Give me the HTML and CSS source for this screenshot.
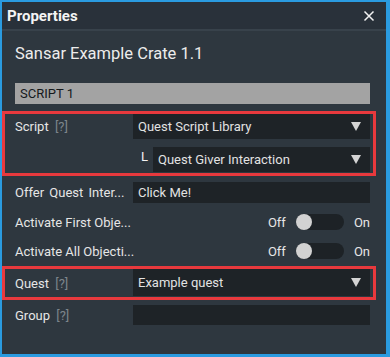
FILE: index.html
```html
<!DOCTYPE html>
<html lang="en">
  <head>
    <meta charset="UTF-8" />
    <meta name="viewport" content="width=device-width, initial-scale=1.0" />
    <title>Properties</title>
    <link rel="stylesheet" href="styles.css">
  </head>
  <body>
    <div class="panel">
      <div class="titlebar">
        <span class="title">Properties</span>
        <svg class="close" width="12" height="12" viewBox="0 0 12 12">
          <path d="M1.5 1.5 L10.5 10.5 M10.5 1.5 L1.5 10.5" stroke="#f2f2f2" stroke-width="1.5" />
        </svg>
      </div>

      <div class="content">
        <div class="object-name">Sansar Example Crate 1.1</div>

        <div class="section-bar">SCRIPT 1</div>

        <div class="highlight script-box">
          <div class="row">
            <div class="label">Script <span class="help">[?]</span></div>
            <div class="dropdown">
              <span>Quest Script Library</span>
              <span class="arrow"></span>
            </div>
          </div>
          <div class="row sub-row">
            <span class="sub-mark">L</span>
            <div class="dropdown">
              <span>Quest Giver Interaction</span>
              <span class="arrow"></span>
            </div>
          </div>
        </div>

        <div class="row offer-row">
          <div class="label wide">Offer Quest Inter...</div>
          <div class="textbox">Click Me!</div>
        </div>

        <div class="row toggle-row">
          <div class="label">Activate First Obje...</div>
          <div class="switch">
            <span>Off</span>
            <span class="track"><span class="knob"></span></span>
            <span>On</span>
          </div>
        </div>

        <div class="row toggle-row">
          <div class="label">Activate All Objecti...</div>
          <div class="switch">
            <span>Off</span>
            <span class="track"><span class="knob"></span></span>
            <span>On</span>
          </div>
        </div>

        <div class="highlight quest-box">
          <div class="row">
            <div class="label">Quest <span class="help">[?]</span></div>
            <div class="dropdown quest-dropdown">
              <span>Example quest</span>
              <span class="arrow"></span>
            </div>
          </div>
        </div>

        <div class="row group-row">
          <div class="label">Group <span class="help">[?]</span></div>
          <div class="textbox"></div>
        </div>
      </div>
    </div>
  </body>
</html>
```

FILE: styles.css
```css
html,
body {
  margin: 0;
  padding: 0;
  background-color: #2a9be0;
}

body {
  font-family: Roboto, "Noto Sans", sans-serif;
  color: #e6e6e6;
  font-size: 13px;
}

.panel {
  box-sizing: border-box;
  width: 390px;
  height: 357px;
  border-style: solid;
  border-color: #2a9be0;
  border-width: 2px 4px 3px 2px;
  background-color: #2e373f;
  overflow: hidden;
}

.titlebar {
  height: 27px;
  display: flex;
  align-items: center;
  justify-content: space-between;
  padding: 0 11px 0 5px;
  background-color: #29313a;
  border-bottom: 2px solid #38424b;
}

.title {
  font-size: 15px;
  font-weight: bold;
  color: #f4f4f4;
}

.close {
  display: block;
  margin-top: 1px;
}

.content {
  display: flex;
  flex-direction: column;
  padding: 10px 16px 0 13px;
}

.object-name {
  height: 26px;
  line-height: 26px;
  font-size: 16.5px;
  color: #ececec;
}

.section-bar {
  margin-top: 16px;
  height: 21px;
  line-height: 21px;
  padding-left: 5px;
  background-color: #a3a3a3;
  color: #15191c;
  font-size: 13px;
}

.highlight {
  margin: 7px -6px 0 -13px;
  border: 3px solid #e8393d;
  padding: 0 3px 0 10px;
}

.row {
  display: flex;
  align-items: center;
}

.label {
  width: 118px;
  flex-shrink: 0;
  white-space: nowrap;
}

.label.wide {
  word-spacing: 2px;
}

.help {
  color: #7d858b;
  margin-left: 3px;
}

.dropdown {
  flex: 1;
  height: 25px;
  display: flex;
  align-items: center;
  justify-content: space-between;
  padding: 0 9px 0 5px;
  background-color: #1e2327;
  color: #e2e2e2;
}

.arrow {
  width: 0;
  height: 0;
  border-left: 5px solid transparent;
  border-right: 5px solid transparent;
  border-top: 9px solid #d4d4d4;
}

.sub-row {
  margin-top: 8px;
  margin-bottom: 1px;
}

.sub-mark {
  width: 12px;
  margin-left: 126px;
  margin-top: -7px;
  font-size: 13px;
  color: #f4f4f4;
}

.textbox {
  flex: 1;
  height: 21px;
  line-height: 21px;
  padding-left: 5px;
  background-color: #1e2327;
  color: #e2e2e2;
}

.offer-row {
  margin-top: 6px;
}

.toggle-row {
  height: 28px;
  margin-top: 1px;
}

.offer-row + .toggle-row {
  margin-top: 5px;
}

.switch {
  flex: 1;
  display: flex;
  align-items: center;
  justify-content: flex-end;
  gap: 10px;
}

.track {
  display: block;
  width: 48px;
  height: 16px;
  border-radius: 8px;
  background-color: #1d2226;
  position: relative;
}

.knob {
  position: absolute;
  left: 0;
  top: 0;
  width: 16px;
  height: 16px;
  border-radius: 50%;
  background-color: #d2d2d2;
}

.quest-box {
  margin-top: 1px;
}

.quest-dropdown {
  height: 27px;
  margin-bottom: 1px;
}

.group-row {
  margin-top: 5px;
}

.group-row .textbox {
  height: 20px;
}
```
